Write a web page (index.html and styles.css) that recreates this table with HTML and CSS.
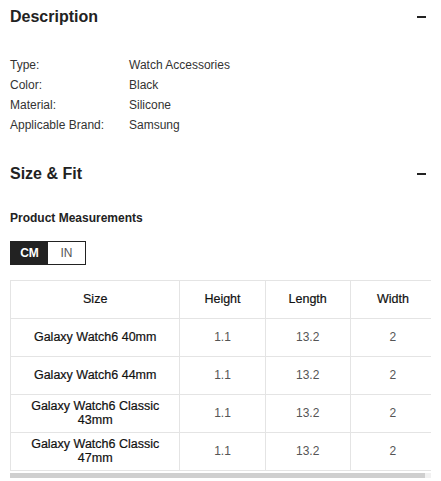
FILE: index.html
```html
<!DOCTYPE html>
<html>
<head>
<meta charset="utf-8">
<link rel="stylesheet" href="styles.css">
</head>
<body>
<div class="page">
  <div class="section-head">
    <h2 class="section-title">Description</h2>
    <span class="minus"></span>
  </div>
  <div class="attrs">
    <div class="attr"><span class="attr-key">Type:</span><span class="attr-val">Watch Accessories</span></div>
    <div class="attr"><span class="attr-key">Color:</span><span class="attr-val">Black</span></div>
    <div class="attr"><span class="attr-key">Material:</span><span class="attr-val">Silicone</span></div>
    <div class="attr"><span class="attr-key">Applicable Brand:</span><span class="attr-val">Samsung</span></div>
  </div>

  <div class="section-head size-head">
    <h2 class="section-title">Size &amp; Fit</h2>
    <span class="minus"></span>
  </div>
  <div class="measure-title">Product Measurements</div>
  <div class="unit-toggle">
    <span class="unit unit-active">CM</span>
    <span class="unit">IN</span>
  </div>

  <div class="table-wrap">
    <table class="size-table">
      <colgroup>
        <col class="c-size"><col class="c-num"><col class="c-num"><col class="c-num">
      </colgroup>
      <thead>
        <tr><th>Size</th><th>Height</th><th>Length</th><th>Width</th></tr>
      </thead>
      <tbody>
        <tr><td class="name">Galaxy Watch6 40mm</td><td>1.1</td><td>13.2</td><td>2</td></tr>
        <tr><td class="name">Galaxy Watch6 44mm</td><td>1.1</td><td>13.2</td><td>2</td></tr>
        <tr><td class="name">Galaxy Watch6 Classic 43mm</td><td>1.1</td><td>13.2</td><td>2</td></tr>
        <tr><td class="name">Galaxy Watch6 Classic 47mm</td><td>1.1</td><td>13.2</td><td>2</td></tr>
      </tbody>
    </table>
  </div>
  <div class="scrollbar"><div class="scroll-thumb"></div></div>
</div>
</body>
</html>
```
FILE: styles.css
```css
* { box-sizing: border-box; }
html, body { margin: 0; padding: 0; background: #fff; }
body {
  font-family: "Liberation Sans", Arial, sans-serif;
  color: #222;
}
.page { padding: 1px 10px 0; width: 441px; }

.section-head {
  height: 32px;
  display: flex;
  align-items: center;
  justify-content: space-between;
  padding-right: 5px;
}
.section-title {
  margin: 0;
  font-size: 16px;
  font-weight: bold;
  line-height: 32px;
  color: #222;
}
.minus {
  display: block;
  width: 9px;
  height: 2px;
  background: #222;
}

.attrs { margin-top: 22px; }
.attr {
  display: flex;
  font-size: 12px;
  line-height: 20px;
  color: #333;
}
.attr-key { width: 119px; }

.size-head { margin-top: 23px; }

.measure-title {
  margin-top: 20px;
  font-size: 12px;
  font-weight: bold;
  line-height: 16px;
  color: #222;
}

.unit-toggle {
  margin-top: 15px;
  display: flex;
  width: 76px;
  height: 24px;
  border: 1px solid #222;
}
.unit {
  flex: 1;
  display: flex;
  align-items: center;
  justify-content: center;
  font-size: 12px;
  color: #555;
}
.unit-active {
  background: #222;
  color: #fff;
  font-weight: bold;
}

.table-wrap {
  margin-top: 15px;
  width: 421px;
  overflow: hidden;
}
.size-table {
  border-collapse: collapse;
  table-layout: fixed;
  width: 426px;
  font-size: 12px;
}
.c-size { width: 169px; }
.c-num { width: 85px; }
.size-table th,
.size-table td {
  border: 1px solid #e4e4e4;
  height: 38px;
  padding: 3px 16px 5px;
  text-align: center;
  line-height: 14px;
}
.size-table th {
  font-weight: normal;
  font-size: 12.5px;
  color: #111;
  -webkit-text-stroke: 0.2px #111;
}
.size-table td { color: #555; }
.size-table td.name {
  color: #111;
  font-size: 12.5px;
  -webkit-text-stroke: 0.2px #111;
}

.scrollbar {
  margin-top: 2px;
  width: 421px;
  height: 5px;
  background: #f1f1f1;
}
.scroll-thumb {
  width: 415px;
  height: 5px;
  background: #cfcfcf;
}
```
